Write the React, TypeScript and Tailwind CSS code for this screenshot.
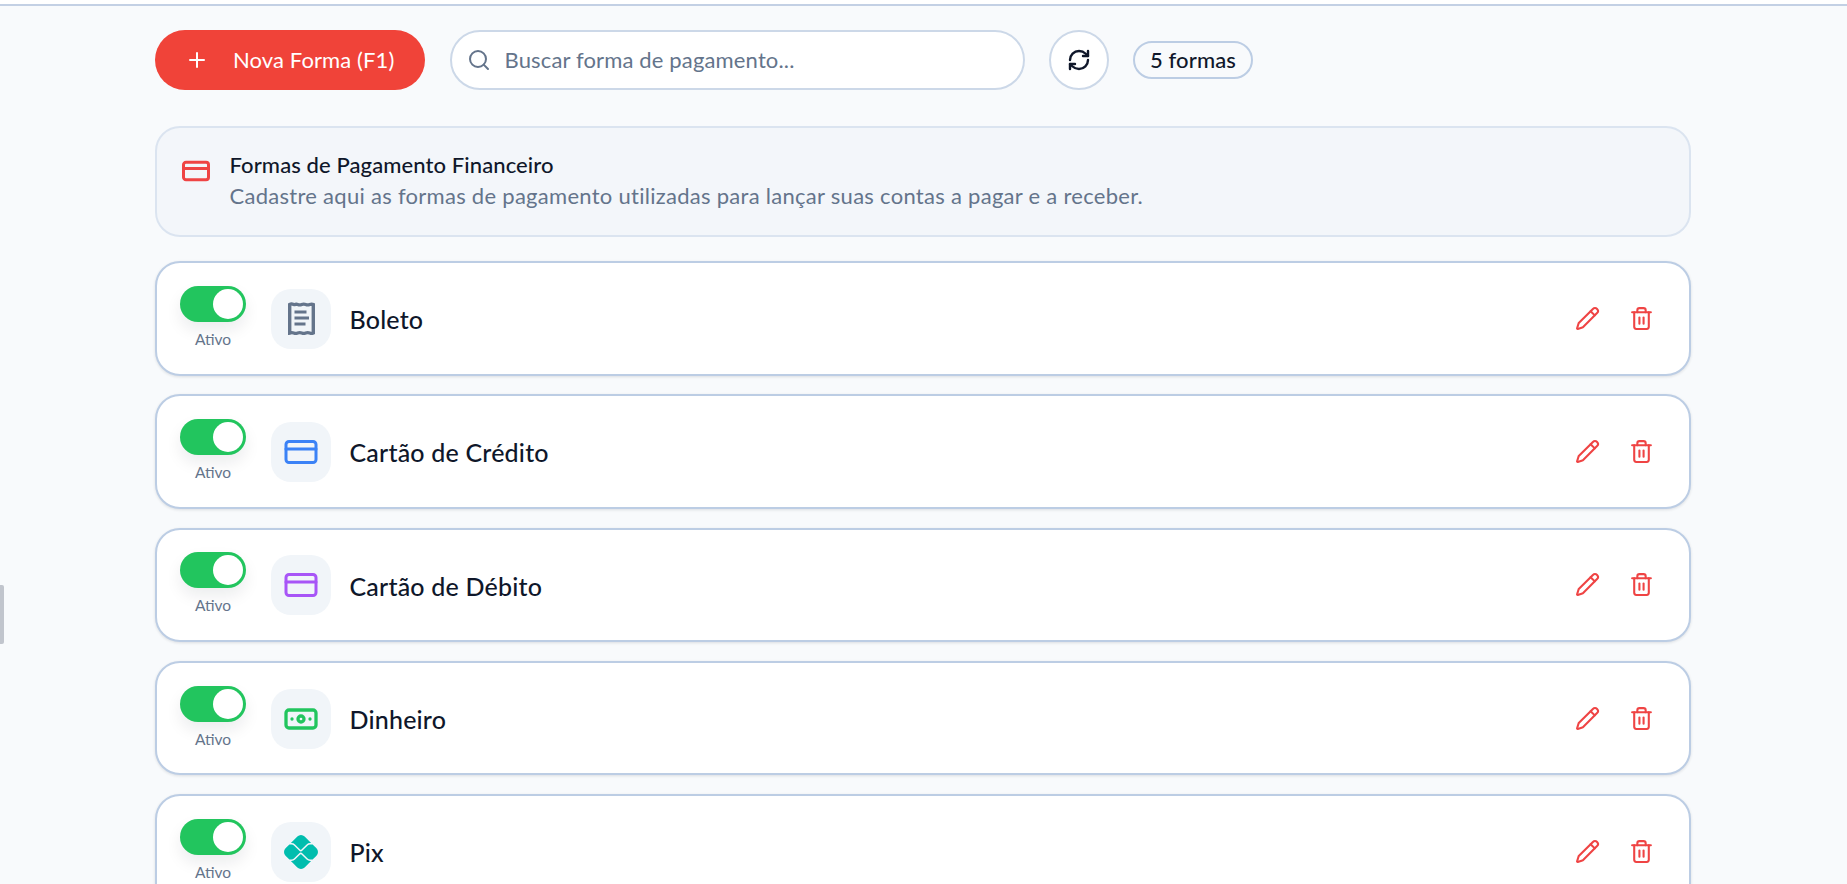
import React from 'react';
import { CreditCard, Banknote, Pencil, Plus, RefreshCw, Search, Trash2 } from 'lucide-react';
import { SiPix } from 'react-icons/si';

// --- Boleto icon (receipt with wavy edges) ---
const ReceiptIcon: React.FC = () => (
  <svg width="27" height="33" viewBox="0 0 27 33" fill="none" stroke="#64748b" strokeWidth="3.4">
    <path d="M1.700 31V2.500c2-1.200 2.500-.6 4 0s2-.8 4 0 2.500.6 4 0 2.500-.6 4 0 2.500.6 4 0 2.500-.6 3.600 0V31c-1.600.8-2.100.6-3.600 0s-2.500-.6-4 0-2.500.6-4 0-2.500-.6-4 0-2.500.6-4 0-2-.6-4 0Z" />
    <path d="M6.500 10h12M6.500 16h14.500M6.500 22h11" strokeWidth="2.800" />
  </svg>
);

// --- Switch ---
const Toggle: React.FC = () => (
  <div className="flex flex-col items-center mb-[1px]">
    <div className="w-[66px] h-9 rounded-full bg-[#22c55e] flex items-center justify-end pr-[3px] shadow-[0_8px_16px_rgba(15,23,42,0.08)]">
      <div className="w-[30px] h-[30px] rounded-full bg-white" />
    </div>
    <span className="mt-[7px] text-[15.5px] leading-[21px] text-[#64748b]">Ativo</span>
  </div>
);

// --- Row ---
const FormaRow: React.FC<{ name: string; icon: React.ReactNode }> = ({ name, icon }) => (
  <div className="h-[114.5px] shrink-0 flex items-center pl-[23px] pr-[35px] bg-white rounded-[25px] border-2 border-[#bccde4] shadow-[0_1px_3px_rgba(15,23,42,0.12)]">
    <Toggle />
    <div className="ml-[25px] mt-[1px] w-[60px] h-[60px] rounded-[20px] bg-[#f1f5f9] flex items-center justify-center">
      {icon}
    </div>
    <span className="ml-[18.500px] mt-[3px] text-[25px] font-medium text-[#0f172a] tracking-[0.2px]">{name}</span>
    <div className="ml-auto flex items-center gap-[29px]">
      <Pencil size={25} className="text-[#ef4444]" />
      <Trash2 size={25} className="text-[#ef4444]" />
    </div>
  </div>
);

const formas = [
  { name: 'Boleto', icon: <ReceiptIcon /> },
  { name: 'Cartão de Crédito', icon: <CreditCard size={36} strokeWidth={2} className="text-[#3b82f6]" /> },
  { name: 'Cartão de Débito', icon: <CreditCard size={36} strokeWidth={2} className="text-[#a855f7]" /> },
  { name: 'Dinheiro', icon: <Banknote size={36} strokeWidth={2.2} className="text-[#22c55e]" /> },
  { name: 'Pix', icon: <SiPix size={34} className="text-[#00bdae]" /> },
];

export default function App() {
  return (
    <div className="relative h-screen overflow-hidden bg-[#f8fafc] font-['Lato','Liberation_Sans',sans-serif]">
      <div className="h-[6px] bg-white border-b-2 border-[#c3d0e4]" />

      {/* alça da gaveta lateral */}
      <div className="absolute left-0 top-[585px] w-[4px] h-[59px] bg-[#c1c5cd] rounded-r-[2px]" />

      <div className="w-[1536px] ml-[155px] pt-[24px]">
        <div className="flex items-center">
          <button className="w-[270px] h-[60px] rounded-full bg-[#f04339] text-white flex items-center pl-[30px]">
            <Plus size={24} />
            <span className="ml-[24px] mb-[2px] text-[22px] tracking-[0.1px]">Nova Forma (F1)</span>
          </button>
          <div className="ml-[24.5px] w-[575px] h-[60px] rounded-full bg-white border-2 border-[#ccd8e8] flex items-center pl-[15px]">
            <Search size={24} className="text-[#64748b]" />
            <span className="ml-[14px] mb-[2px] text-[22px] text-[#64748b] tracking-[0.15px]">Buscar forma de pagamento...</span>
          </div>
          <button className="ml-[24.5px] w-[60px] h-[60px] rounded-full bg-white border-2 border-[#ccd8e8] flex items-center justify-center">
            <RefreshCw size={24} strokeWidth={2.4} className="text-[#0f172a]" />
          </button>
          <div className="ml-[24px] w-[120px] h-[38px] rounded-full border-2 border-[#bccde4] flex items-center justify-center">
            <span className="mb-[2px] text-[22px] font-medium tracking-[0.1px] text-[#0f172a]">5 formas</span>
          </div>
        </div>

        <div className="mt-[36px] h-[110.5px] rounded-[25px] bg-[#f3f6fa] border-2 border-[#dbe4f0] flex items-start pl-[24px] pt-[29px]">
          <CreditCard size={30} strokeWidth={2.4} className="text-[#ef4444] mt-[-1px]" />
          <div className="ml-[18.500px] -mt-[7px]">
            <p className="text-[22px] leading-[30.500px] font-medium tracking-[0.1px] text-[#0f172a]">Formas de Pagamento Financeiro</p>
            <p className="text-[22px] leading-[30.500px] text-[#64748b] tracking-[0.28px]">
              Cadastre aqui as formas de pagamento utilizadas para lançar suas contas a pagar e a receber.
            </p>
          </div>
        </div>

        <div className="mt-[24.5px] flex flex-col gap-[18.800px]">
          {formas.map((f) => (
            <FormaRow key={f.name} name={f.name} icon={f.icon} />
          ))}
        </div>
      </div>
    </div>
  );
}
